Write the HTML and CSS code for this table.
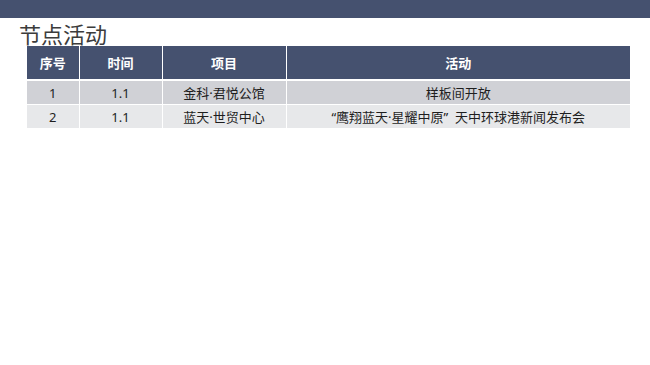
FILE: index.html
```html
<!DOCTYPE html>
<html lang="zh">
<head>
<meta charset="utf-8">
<link rel="stylesheet" href="styles.css">
</head>
<body>
<div class="topbar"></div>
<h1 class="title">节点活动</h1>
<table class="grid">
  <colgroup>
    <col class="c1"><col class="c2"><col class="c3"><col class="c4">
  </colgroup>
  <thead>
    <tr><th>序号</th><th>时间</th><th>项目</th><th>活动</th></tr>
  </thead>
  <tbody>
    <tr class="odd"><td>1</td><td>1.1</td><td>金科·君悦公馆</td><td>样板间开放</td></tr>
    <tr class="even"><td>2</td><td>1.1</td><td>蓝天·世贸中心</td><td>“鹰翔蓝天·星耀中原”&nbsp; 天中环球港新闻发布会</td></tr>
  </tbody>
</table>
</body>
</html>
```
FILE: styles.css
```css
html, body {
  margin: 0;
  padding: 0;
  background: #ffffff;
  font-family: "Noto Sans CJK SC", "Noto Sans", sans-serif;
}
.topbar {
  height: 18px;
  background: #45516f;
}
.title {
  margin: 2px 0 0 19px;
  height: 26px;
  font-size: 22px;
  line-height: 26px;
  font-weight: 400;
  color: #3c3c3c;
}
.grid {
  margin: 0 0 0 27px;
  width: 603px;
  border-collapse: collapse;
  table-layout: fixed;
  font-family: "Noto Sans", "Noto Sans CJK SC", sans-serif;
  font-size: 13px;
}
.c1 { width: 52px; }
.c2 { width: 83px; }
.c3 { width: 124px; }
.c4 { width: 344px; }
.grid th, .grid td {
  border: 1px solid #ffffff;
  text-align: center;
  padding: 0;
  white-space: nowrap;
  line-height: 16px;
}
.grid th {
  background: #45516f;
  color: #ffffff;
  font-weight: 700;
  height: 33px;
  border-bottom-width: 2px;
}
.grid td {
  height: 23px;
  color: #1e1e1e;
}
.grid tr.odd td { background: #d0d1d6; }
.grid tr.even td { background: #e7e8ea; }
.grid thead tr th { border-top: none; }
.grid tr th:first-child, .grid tr td:first-child { border-left: none; }
.grid tr th:last-child, .grid tr td:last-child { border-right: none; }
```
